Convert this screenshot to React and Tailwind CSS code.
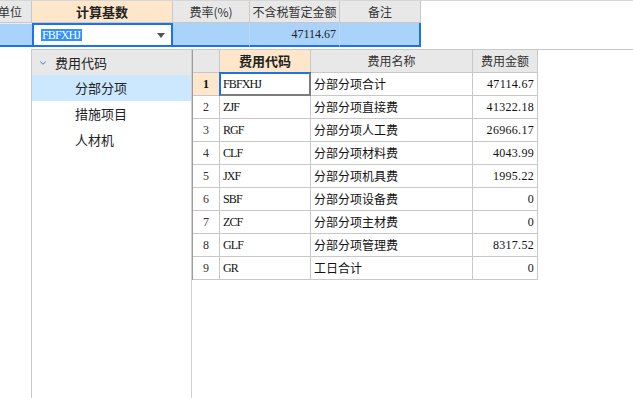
import { ChevronDown } from 'lucide-react'

const cjk = "font-['Noto_Sans_CJK_SC',sans-serif]"
const num = "font-['Liberation_Serif','Noto_Sans_CJK_SC',serif]"

const rows = [
  { no: 1, code: 'FBFXHJ', name: '分部分项合计', amount: '47114.67' },
  { no: 2, code: 'ZJF', name: '分部分项直接费', amount: '41322.18' },
  { no: 3, code: 'RGF', name: '分部分项人工费', amount: '26966.17' },
  { no: 4, code: 'CLF', name: '分部分项材料费', amount: '4043.99' },
  { no: 5, code: 'JXF', name: '分部分项机具费', amount: '1995.22' },
  { no: 6, code: 'SBF', name: '分部分项设备费', amount: '0' },
  { no: 7, code: 'ZCF', name: '分部分项主材费', amount: '0' },
  { no: 8, code: 'GLF', name: '分部分项管理费', amount: '8317.52' },
  { no: 9, code: 'GR', name: '工日合计', amount: '0' },
]

const treeItems = ['分部分项', '措施项目', '人材机']

function HeaderCell({ w, children, active }) {
  return (
    <div
      className={`${w} h-full flex items-center justify-center border-r border-b border-[#c8c8c8] ${
        active ? 'bg-[#fde6c9] font-bold text-[13px] text-[#222]' : 'bg-[#e8e8e8] text-[12px] text-[#333]'
      }`}
    >
      {children}
    </div>
  )
}

export default function App() {
  return (
    <div className={`w-[633px] h-[398px] bg-white overflow-hidden flex flex-col ${cjk}`}>
      {/* top table header */}
      <div className="flex h-[23px] border-t border-[#d6d6d6] shrink-0">
        <div className="w-[32px] h-full bg-[#e8e8e8] border-r border-b border-[#c8c8c8] overflow-hidden flex items-center text-[12px] text-[#333]">
          <span className="ml-[-2px] whitespace-nowrap">单位</span>
        </div>
        <HeaderCell w="w-[141px]" active>计算基数</HeaderCell>
        <HeaderCell w="w-[77px]">费率(%)</HeaderCell>
        <HeaderCell w="w-[90px]">不含税暂定金额</HeaderCell>
        <HeaderCell w="w-[81px]">备注</HeaderCell>
      </div>

      {/* selected row */}
      <div className="flex h-[24px] shrink-0">
        <div className="w-[32px] h-full bg-[#a9d3fb] border-t border-t-[#e4eef8] border-b-2 border-b-[#1a73e8]" />
        <div className="w-[141px] h-full bg-white border-2 border-[#1a73e8] flex items-center pl-[7px] pr-[6px]">
          <span className={`${num} text-[12px] tracking-[-0.9px] leading-[12px] bg-[#3390ff] text-white pl-[1px] pr-[2px]`}>FBFXHJ</span>
          <div className="ml-auto w-0 h-0 border-l-[4px] border-r-[4px] border-t-[5px] border-l-transparent border-r-transparent border-t-[#555]" />
        </div>
        <div className="w-[77px] h-full bg-[#a9d3fb] border-r border-r-[#c0d8ee] border-b-2 border-b-[#1a73e8]" />
        <div className={`w-[90px] h-full bg-[#a9d3fb] border-r border-r-[#c0d8ee] border-b-2 border-b-[#1a73e8] flex items-center justify-end pr-[3px] ${num} text-[12px] text-[#222]`}>
          47114.67
        </div>
        <div className="w-[81px] h-full bg-[#a9d3fb] border-b-2 border-r-2 border-[#1a73e8]" />
      </div>

      {/* dropdown popup */}
      <div className="ml-[31px] mt-[2px] flex-1 flex border-l border-t border-[#c8c8c8]">
        {/* tree */}
        <div className="w-[160px] border-r border-[#d0d0d0] flex flex-col">
          <div className="h-[25px] bg-[#e8e8e8] flex items-center pl-[6px] text-[13px] text-[#222]">
            <ChevronDown className="w-[10px] h-[10px] text-[#4a8fe0]" strokeWidth={2.5} />
            <span className="ml-[7px]">费用代码</span>
          </div>
          {treeItems.map((t, i) => (
            <div
              key={t}
              className={`h-[26px] flex items-center pl-[43px] text-[13px] text-[#222] ${i === 0 ? 'bg-[#cce8ff]' : ''}`}
            >
              {t}
            </div>
          ))}
        </div>

        {/* grid */}
        <div className="flex-1">
          <div className="w-[346px] border-l border-[#9c9c9c]">
            <div className="flex h-[23px] border-b border-[#c8c8c8]">
              <div className="w-[27px] bg-[#e8e8e8] border-r border-[#c8c8c8]" />
              <div className="w-[91px] bg-[#fde6c9] border-r border-[#c8c8c8] flex items-center justify-center font-bold text-[13px] text-[#222]">
                费用代码
              </div>
              <div className="w-[162px] bg-[#e8e8e8] border-r border-[#c8c8c8] flex items-center justify-center text-[12px] text-[#333]">
                费用名称
              </div>
              <div className="w-[65px] bg-[#e8e8e8] border-r border-[#c8c8c8] flex items-center justify-center text-[12px] text-[#333]">
                费用金额
              </div>
            </div>
            {rows.map((r) => {
              const sel = r.no === 1
              return (
                <div key={r.no} className="flex h-[23px] border-b border-[#c8c8c8]">
                  <div
                    className={`w-[27px] border-r border-[#c8c8c8] flex items-center justify-center ${num} text-[12px] ${
                      sel ? 'bg-[#fde6c9] font-bold text-[#111]' : 'text-[#333]'
                    }`}
                  >
                    {r.no}
                  </div>
                  <div className={`relative w-[91px] border-r border-[#c8c8c8] flex items-center pl-[3px] ${num} text-[12px] tracking-[-0.9px] text-[#111]`}>
                    {r.code}
                    {sel && (
                      <div className="pointer-events-none absolute -left-px -top-px w-[92px] h-[24px] border-2 border-t-[#1a73e8] border-l-[#1a73e8] border-r-[#7c7c7c] border-b-[#7c7c7c]" />
                    )}
                  </div>
                  <div className="w-[162px] border-r border-[#c8c8c8] flex items-center pl-[3px] text-[12px] text-[#111]">
                    {r.name}
                  </div>
                  <div className={`w-[65px] border-r border-[#c8c8c8] flex items-center justify-end pr-[3px] ${num} text-[12px] tracking-[0.3px] text-[#111]`}>
                    {r.amount}
                  </div>
                </div>
              )
            })}
          </div>
        </div>
      </div>
    </div>
  )
}
